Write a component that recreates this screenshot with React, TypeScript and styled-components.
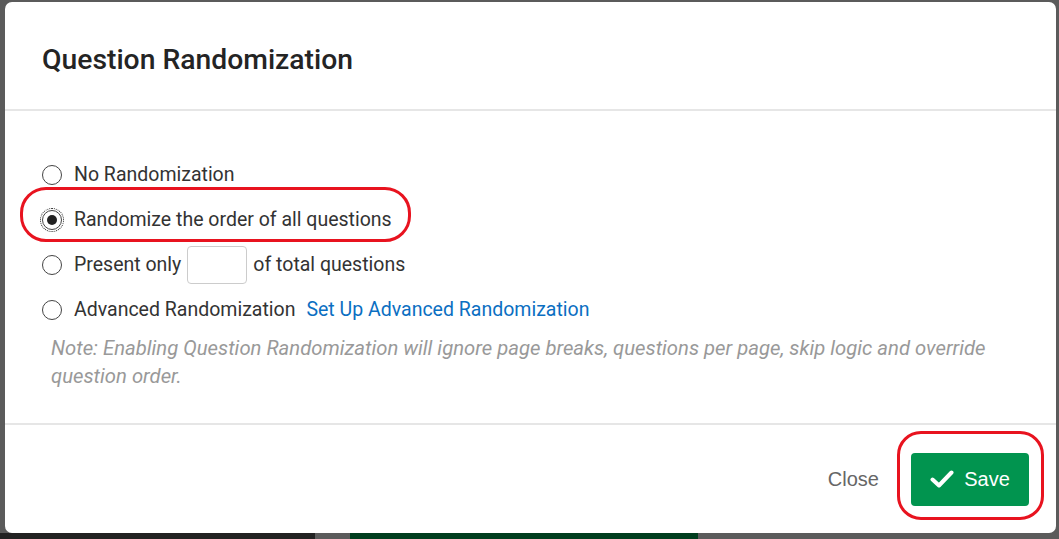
import React from "react";
import styled, { createGlobalStyle } from "styled-components";

const Global = createGlobalStyle`
  html, body { margin: 0; padding: 0; }
  body {
    background: #5b5b5b;
    font-family: Roboto, "Noto Sans", sans-serif;
    width: 1059px;
    height: 539px;
    overflow: hidden;
  }
`;

const Backdrop = styled.div`
  position: relative;
  width: 1059px;
  height: 539px;
  padding: 2px 3px 0 5px;
  box-sizing: border-box;
`;

const BottomStrip = styled.div`
  position: absolute;
  left: 0;
  right: 0;
  bottom: 0;
  height: 6px;
  display: flex;
`;

const StripPart = styled.div<{ $w: number; $c: string }>`
  width: ${(p) => p.$w}px;
  background: ${(p) => p.$c};
`;

const Modal = styled.div`
  position: relative;
  z-index: 1;
  width: 1051px;
  height: 531px;
  background: #fff;
  border-radius: 7px;
  display: flex;
  flex-direction: column;
`;

const Header = styled.div`
  height: 109px;
  border-bottom: 2px solid #e6e6e6;
  display: flex;
  align-items: center;
  padding-left: 37px;
  padding-top: 7px;
  box-sizing: border-box;
`;

const Title = styled.h1`
  margin: 0;
  font-size: 28.3px;
  font-weight: 500;
  color: #242424;
`;

const Body = styled.div`
  flex: 1;
  padding: 41px 0 0 37px;
  border-bottom: 2px solid #e6e6e6;
  display: flex;
  flex-direction: column;
`;

const Option = styled.label`
  display: flex;
  align-items: center;
  height: 45px;
  font-size: 19.5px;
  color: #333;
`;

const Radio = styled.span<{ $checked?: boolean }>`
  width: 20px;
  height: 20px;
  border: 1.5px solid #444;
  border-radius: 50%;
  margin-right: 12px;
  box-sizing: border-box;
  display: flex;
  align-items: center;
  justify-content: center;
  &::after {
    content: "";
    display: ${(p) => (p.$checked ? "block" : "none")};
    width: 10px;
    height: 10px;
    border-radius: 50%;
    background: #222;
  }
  ${(p) => (p.$checked ? `outline: 1px dotted #222; outline-offset: 1px;` : "")}
`;

const NumberBox = styled.span`
  display: inline-block;
  width: 60px;
  height: 38px;
  border: 1px solid #ccc;
  border-radius: 4px;
  margin: 0 6px;
  box-sizing: border-box;
`;

const Link = styled.a`
  color: #0b6fc2;
  margin-left: 11px;
  text-decoration: none;
`;

const Note = styled.p`
  margin: 2px 0 0 9px;
  font-size: 20.3px;
  line-height: 28px;
  font-style: italic;
  color: #999;
  max-width: 955px;
`;

const Footer = styled.div`
  height: 108px;
  display: flex;
  align-items: center;
  justify-content: flex-end;
  padding-right: 27px;
  gap: 32px;
`;

const CloseBtn = styled.span`
  font-family: "Liberation Sans", Arial, sans-serif;
  font-size: 20px;
  color: #666;
`;

const SaveBtn = styled.button`
  width: 118px;
  height: 53px;
  border: none;
  border-radius: 4px;
  background: #01944f;
  color: #fff;
  font-family: "Liberation Sans", Arial, sans-serif;
  font-size: 20px;
  display: flex;
  align-items: center;
  justify-content: center;
  gap: 10px;
  padding: 0;
`;

const Annotation = styled.div<{ $l: number; $t: number; $w: number; $h: number; $r: number }>`
  position: absolute;
  left: ${(p) => p.$l}px;
  top: ${(p) => p.$t}px;
  width: ${(p) => p.$w}px;
  height: ${(p) => p.$h}px;
  border: 3px solid #e8131f;
  border-radius: ${(p) => p.$r}px;
  box-sizing: border-box;
  z-index: 2;
  pointer-events: none;
`;

export default function App() {
  return (
    <>
      <Global />
      <Backdrop>
        <BottomStrip>
          <StripPart $w={315} $c="#222" />
          <StripPart $w={35} $c="#5b5b5b" />
          <StripPart $w={348} $c="#003d1e" />
          <StripPart $w={361} $c="#5b5b5b" />
        </BottomStrip>
        <Modal>
          <Header>
            <Title>Question Randomization</Title>
          </Header>
          <Body>
            <Option>
              <Radio />
              No Randomization
            </Option>
            <Option>
              <Radio $checked />
              Randomize the order of all questions
            </Option>
            <Option>
              <Radio />
              Present only
              <NumberBox />
              of total questions
            </Option>
            <Option>
              <Radio />
              Advanced Randomization
              <Link>Set Up Advanced Randomization</Link>
            </Option>
            <Note>
              Note: Enabling Question Randomization will ignore page breaks, questions per page, skip logic and override question order.
            </Note>
          </Body>
          <Footer>
            <CloseBtn>Close</CloseBtn>
            <SaveBtn>
              <svg width="24" height="20" viewBox="0 0 24 20">
                <path d="M2.5 10.5 L9 16.5 L21.5 3.5" fill="none" stroke="#fff" strokeWidth="4" strokeLinecap="round" strokeLinejoin="round" />
              </svg>
              Save
            </SaveBtn>
          </Footer>
        </Modal>
        <Annotation $l={20} $t={187} $w={391} $h={55} $r={26} />
        <Annotation $l={897} $t={431} $w={147} $h={89} $r={24} />
      </Backdrop>
    </>
  );
}
